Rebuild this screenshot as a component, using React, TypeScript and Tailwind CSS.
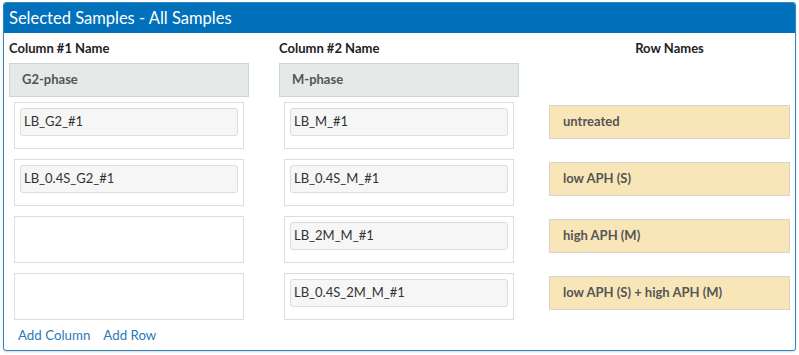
import React from "react";

const rows = [
  { c1: "LB_G2_#1", c2: "LB_M_#1", name: "untreated" },
  { c1: "LB_0.4S_G2_#1", c2: "LB_0.4S_M_#1", name: "low APH (S)" },
  { c1: null, c2: "LB_2M_M_#1", name: "high APH (M)" },
  { c1: null, c2: "LB_0.4S_2M_M_#1", name: "low APH (S) + high APH (M)" },
];

function Cell({ value }: { value: string | null }) {
  return (
    <div className="mx-[5px] h-[47px] border border-[#dddddd] bg-white px-[5px] pt-[5px]">
      {value !== null && (
        <div className="flex h-[28px] items-center rounded-[3px] border border-[#dddddd] bg-[#f6f6f6] px-[3px] text-[13px] text-[#333333]">
          {value}
        </div>
      )}
    </div>
  );
}

export default function App() {
  return (
    <div
      className="h-[355px] w-[799px] bg-white pl-[3px] pt-[2px]"
      style={{ fontFamily: "Lato, 'Liberation Sans', sans-serif" }}
    >
      <div className="h-[349px] w-[793px] overflow-hidden rounded-[3px] border border-[#2f86c0] bg-white shadow-[0_1px_2px_rgba(0,0,0,0.15)]">
        <div className="flex h-[30px] items-center bg-[#0171bb] px-[5px] text-[16.5px] text-white">
          Selected Samples - All Samples
        </div>
        <div className="grid grid-cols-[240px_240px_241px] gap-x-[30px] px-[5px]">
          <div>
            <div className="flex h-[30px] items-center pt-[2px] text-[13px] font-bold text-[#222222]">Column #1 Name</div>
            <div className="flex h-[34px] items-center border border-[#cfd4d3] bg-[#e5e9e8] px-[12px] text-[13px] font-bold text-[#555555]">G2-phase</div>
            <div className="mt-[5px] flex flex-col gap-[10px]">
              {rows.map((r, i) => (
                <Cell key={i} value={r.c1} />
              ))}
            </div>
          </div>
          <div>
            <div className="flex h-[30px] items-center pt-[2px] text-[13px] font-bold text-[#222222]">Column #2 Name</div>
            <div className="flex h-[34px] items-center border border-[#cfd4d3] bg-[#e5e9e8] px-[12px] text-[13px] font-bold text-[#555555]">M-phase</div>
            <div className="mt-[5px] flex flex-col gap-[10px]">
              {rows.map((r, i) => (
                <Cell key={i} value={r.c2} />
              ))}
            </div>
          </div>
          <div>
            <div className="flex h-[30px] items-center justify-center pt-[2px] text-[13px] font-bold text-[#222222]">Row Names</div>
            <div className="h-[34px]" />
            <div className="mt-[8px] flex flex-col gap-[23px]">
              {rows.map((r, i) => (
                <div key={i} className="flex h-[34px] items-center border border-[#d8d6cc] bg-[#f8e6b9] px-[13px] text-[13px] font-bold text-[#555555]">
                  {r.name}
                </div>
              ))}
            </div>
          </div>
        </div>
        <div className="flex gap-[13px] px-[14px] pt-[6px] text-[13.3px] leading-[18px] text-[#2a7ab8]">
          <span>Add Column</span>
          <span>Add Row</span>
        </div>
      </div>
    </div>
  );
}
